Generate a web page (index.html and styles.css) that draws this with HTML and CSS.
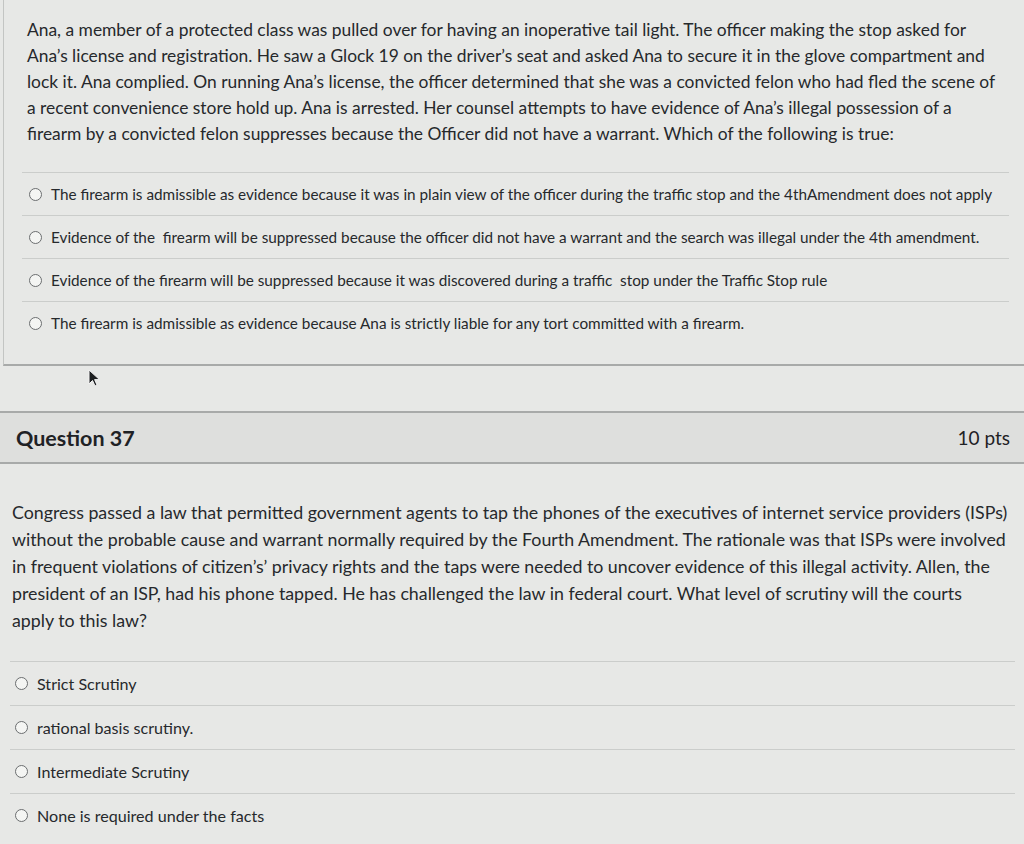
FILE: index.html
```html
<!DOCTYPE html>
<html lang="en">
<head>
<meta charset="utf-8">
<title>Quiz</title>
<link rel="stylesheet" href="styles.css">
</head>
<body>
<div class="page">
  <section class="card prev">
    <p class="qtext">Ana, a member of a protected class was pulled over for having an inoperative tail light. The officer making the stop asked for<br>Ana’s license and registration. He saw a Glock 19 on the driver’s seat and asked Ana to secure it in the glove compartment and<br>lock it. Ana complied. On running Ana’s license, the officer determined that she was a convicted felon who had fled the scene of<br>a recent convenience store hold up. Ana is arrested. Her counsel attempts to have evidence of Ana’s illegal possession of a<br>firearm by a convicted felon suppresses because the Officer did not have a warrant. Which of the following is true:</p>
    <div class="answers">
      <label class="ans"><span class="radio"></span><span class="atext">The firearm is admissible as evidence because it was in plain view of the officer during the traffic stop and the 4thAmendment does not apply</span></label>
      <label class="ans"><span class="radio"></span><span class="atext">Evidence of the &nbsp;firearm will be suppressed because the officer did not have a warrant and the search was illegal under the 4th amendment.</span></label>
      <label class="ans"><span class="radio"></span><span class="atext">Evidence of the firearm will be suppressed because it was discovered during a traffic &nbsp;stop under the Traffic Stop rule</span></label>
      <label class="ans"><span class="radio"></span><span class="atext">The firearm is admissible as evidence because Ana is strictly liable for any tort committed with a firearm.</span></label>
    </div>
  </section>
  <div class="gap"></div>
  <header class="qhead">
    <h2 class="qtitle">Question 37</h2>
    <span class="pts">10 pts</span>
  </header>
  <section class="card cur">
    <p class="qtext">Congress passed a law that permitted government agents to tap the phones of the executives of internet service providers (ISPs)<br>without the probable cause and warrant normally required by the Fourth Amendment. The rationale was that ISPs were involved<br>in frequent violations of citizen’s’ privacy rights and the taps were needed to uncover evidence of this illegal activity. Allen, the<br>president of an ISP, had his phone tapped. He has challenged the law in federal court. What level of scrutiny will the courts<br>apply to this law?</p>
    <div class="answers">
      <label class="ans"><span class="radio"></span><span class="atext">Strict Scrutiny</span></label>
      <label class="ans"><span class="radio"></span><span class="atext">rational basis scrutiny.</span></label>
      <label class="ans"><span class="radio"></span><span class="atext">Intermediate Scrutiny</span></label>
      <label class="ans"><span class="radio"></span><span class="atext">None is required under the facts</span></label>
    </div>
  </section>
  <svg class="cursor" width="14" height="20" viewBox="0 0 14 20" aria-hidden="true">
    <path d="M1 1 L1 15 L4.5 11.5 L7 17 L9 16 L6.6 10.6 L11.5 10.6 Z" fill="#1d1f21" stroke="#f2f2f2" stroke-width="1"/>
  </svg>
</div>
</body>
</html>
```

FILE: styles.css
```css
html, body {
  margin: 0;
  padding: 0;
}
body {
  background: #e7e8e6;
  font-family: Lato, "Open Sans", "Liberation Sans", sans-serif;
  color: #26292c;
}
.page {
  position: relative;
  width: 1024px;
  height: 844px;
  overflow: hidden;
  background: #e7e8e6;
}
.card.prev {
  margin-left: 3px;
  border-left: 1px solid #c3c5c3;
  padding: 17px 0 20px 0;
  border-bottom: 2px solid #a8aaa9;
}
.prev .qtext {
  margin: 0 0 25px 23px;
  font-size: 17.4px;
  line-height: 26px;
  white-space: nowrap;
}
.prev .answers {
  margin: 0 15px 0 18px;
  border-top: 1px solid #cbcdcb;
}
.ans {
  display: flex;
  align-items: center;
  gap: 9px;
}
.prev .ans {
  height: 42px;
  padding-left: 7px;
  font-size: 15.3px;
}
.ans + .ans {
  border-top: 1px solid #cbcdcb;
}
.radio {
  width: 11px;
  height: 11px;
  border: 1.5px solid #6b6e70;
  border-radius: 50%;
  background: #f4f5f3;
  flex: none;
}
.atext {
  white-space: nowrap;
}
.gap {
  height: 45px;
}
.qhead {
  display: flex;
  justify-content: space-between;
  align-items: center;
  height: 49px;
  padding: 0 14px 0 16px;
  border-top: 2px solid #a8aaa9;
  border-bottom: 2px solid #a8aaa9;
  background: #dedfdd;
}
.qtitle {
  margin: 0;
  font-size: 21.5px;
  font-weight: 700;
  color: #1f2225;
}
.pts {
  font-size: 19px;
  color: #1f2225;
}
.card.cur {
  padding-top: 35px;
}
.cur .qtext {
  margin: 0 0 27px 12px;
  font-size: 17.8px;
  line-height: 27px;
  white-space: nowrap;
}
.cur .answers {
  margin: 0 9px 0 10px;
  border-top: 1px solid #cbcdcb;
}
.cur .ans {
  height: 43px;
  padding-left: 5px;
  font-size: 16.1px;
}
.cursor {
  position: absolute;
  left: 88px;
  top: 369px;
}
```
